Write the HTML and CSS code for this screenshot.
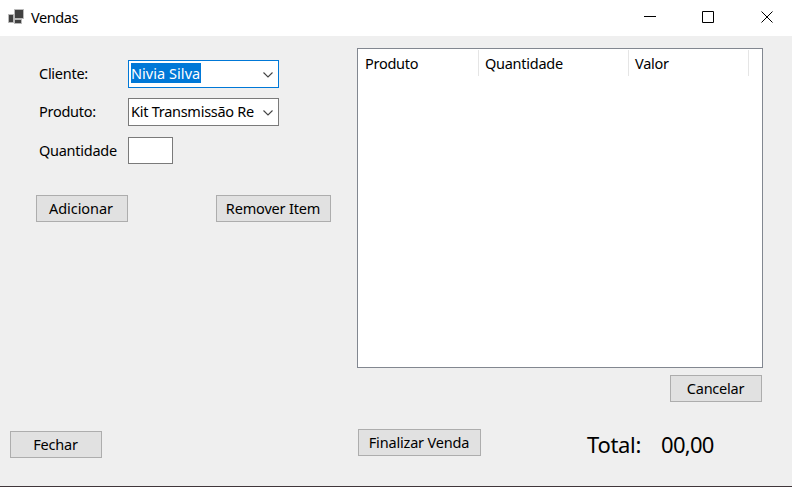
FILE: index.html
```html
<!DOCTYPE html>
<html lang="pt-BR">
<head>
<meta charset="utf-8">
<title>Vendas</title>
<link rel="stylesheet" href="styles.css">
</head>
<body>
<div class="window">
  <header class="titlebar">
    <svg class="app-icon" width="18" height="17" viewBox="0 0 18 17"><g fill="#414141" stroke="#b9b9b9"><path d="M.5 5.500h5v8h-5zM6.500 10.500h7v4h-7zM6.500.5h9v9h-9z"/></g></svg>
    <span class="title">Vendas</span>
    <svg class="controls" width="130" height="14" viewBox="0 0 130 14" fill="none" stroke="#000"><path d="M0 6.500h12M58.500 1.500h11v11h-11z"/><path d="M117.500 1.500l11 11M128.500 1.500l-11 11"/></svg>
  </header>
  <main class="content">
    <section class="left">
      <form class="fields">
        <label class="cliente">Cliente:</label>
        <div class="combo focused"><span class="selected">Nivia Silva</span><svg width="10" height="6" viewBox="0 0 10 6"><path d="M.5.5L5 5L9.500.5" fill="none" stroke="#444" stroke-width="1.100"/></svg></div>
        <label class="produto">Produto:</label>
        <div class="combo"><span class="kit">Kit Transmissão Re</span><svg width="10" height="6" viewBox="0 0 10 6"><path d="M.5.5L5 5L9.500.5" fill="none" stroke="#444" stroke-width="1.100"/></svg></div>
        <label class="quantidade">Quantidade</label>
        <div class="textbox"></div>
      </form>
      <div class="actions">
        <button class="adicionar">Adicionar</button>
        <button class="remover">Remover Item</button>
      </div>
      <button class="fechar">Fechar</button>
    </section>
    <section class="right">
      <div class="list">
        <div class="list-head"><span>Produto</span><span>Quantidade</span><span>Valor</span></div>
      </div>
      <button class="cancelar">Cancelar</button>
      <div class="summary">
        <button class="finalizar">Finalizar Venda</button>
        <span class="total-label">Total:</span>
        <span class="total-value">00,00</span>
      </div>
    </section>
  </main>
</div>
</body>
</html>
```
FILE: styles.css
```css
* { box-sizing: border-box; }
body {
  margin: 0;
  font: 14.5px/20px "Noto Sans", "Open Sans", sans-serif;
  letter-spacing: -0.27px;
  color: #000;
  overflow: hidden;
}
.window {
  width: 792px;
  height: 487px;
  display: flex;
  flex-direction: column;
  background: #efefef;
  border-bottom: 1px solid #40363a;
}
.titlebar {
  height: 36px;
  flex: none;
  display: flex;
  background: #fff;
  padding: 7px 18px 0 8px;
}
.app-icon { margin-top: 2px; }
.title { margin-left: 5px; letter-spacing: -0.4px; }
.controls { margin: 3px 0 0 auto; }
.content { flex: 1; display: flex; }
.left { width: 357px; display: flex; flex-direction: column; }
.fields {
  display: grid;
  grid-template-columns: 89px 151px;
  grid-template-rows: 28px 28px 27px;
  row-gap: 10px;
  margin: 24px 0 0 39px;
  align-items: center;
}
.fields label { padding-bottom: 2px; }
.textbox {
  width: 45px;
  height: 27px;
  margin-top: 2px;
  background: #fff;
  border: 1px solid #7a7a7a;
}
.fields .quantidade { padding-bottom: 0; }
.combo {
  height: 28px;
  display: flex;
  align-items: center;
  justify-content: space-between;
  background: #fff;
  border: 1px solid #7a7a7a;
  padding: 0 5px 2px 2px;
  white-space: nowrap;
}
.combo svg { margin-top: 4px; }
.focused { border-color: #0078d7; }
.selected { background: #0078d7; color: #fff; width: 70px; letter-spacing: 0.05px; }
button {
  font: inherit;
  letter-spacing: -0.18px;
  color: inherit;
  height: 27px;
  width: 92px;
  padding: 0 1px 2px 0;
  background: #e1e1e1;
  border: 1px solid #adadad;
  white-space: nowrap;
}
.adicionar { letter-spacing: -0.05px; padding-right: 2px; }
.cancelar { letter-spacing: -0.25px; }
.actions { display: flex; gap: 88px; margin: 32px 0 0 36px; }
.remover { width: 115px; }
.fechar { margin: auto 0 28px 10px; }
.right { width: 406px; display: flex; flex-direction: column; padding-top: 12px; }
.list { height: 320px; background: #fff; border: 1px solid #828790; padding-top: 1px; }
.list-head { display: flex; }
.list-head span {
  width: 150px;
  height: 26px;
  padding: 3px 0 0 6px;
  border-right: 1px solid #e5e5e5;
}
.list-head span:first-child { width: 121px; padding-left: 7px; }
.list-head span:last-child { width: 120px; }
.cancelar { margin: 7px 1px 0 auto; }
.summary { display: flex; margin: 27px 0 0 1px; }
.finalizar { width: 123px; }
.total-label, .total-value { font-size: 22px; line-height: 30px; letter-spacing: -0.3px; }
.total-value { letter-spacing: -0.7px; }
.total-label { width: 74px; margin-left: 106px; }
```
